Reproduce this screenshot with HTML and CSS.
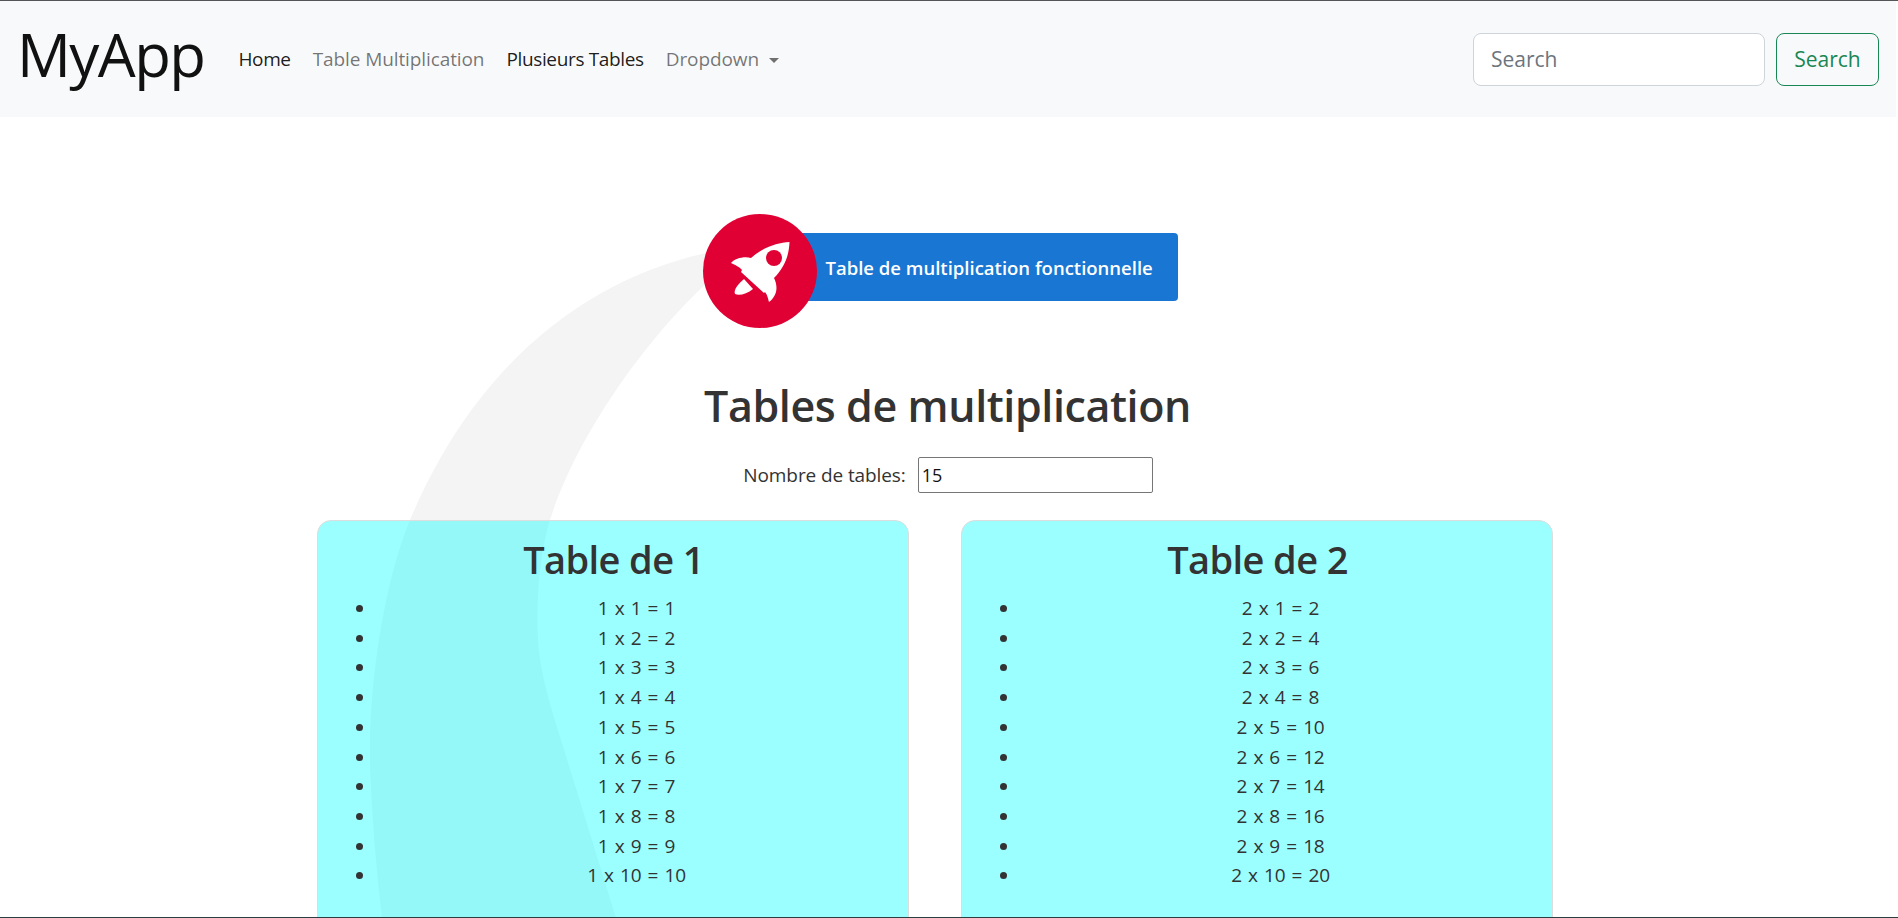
FILE: index.html
```html
<!DOCTYPE html>
<html lang="fr">
<head>
    <meta charset="UTF-8">
    <title>MyApp</title>
    <link rel="stylesheet" href="styles.css">
</head>
<body>
    <!-- decorative trail behind the rocket -->
    <svg class="trail" viewBox="0 0 1898 918" width="1898" height="918">
        <path d="M706 253C585 280 475 365 410 520C383 585 368 690 370 767C372 817 376 868 382 918L616 918C600 865 578 795 561 740C551 707 540 675 538 640C536 605 539 555 550 520C578 432 650 335 707 283Z"/>
    </svg>

    <nav class="navbar">
        <a class="brand" href="#">MyApp</a>
        <ul class="nav-links">
            <li><a class="nav-link dark" href="#">Home</a></li>
            <li><a class="nav-link" href="#">Table Multiplication</a></li>
            <li><a class="nav-link dark" href="#">Plusieurs Tables</a></li>
            <li><a class="nav-link caret" href="#">Dropdown</a></li>
        </ul>
        <form class="search">
            <input class="search-input" type="text" placeholder="Search">
            <button class="search-btn" type="button">Search</button>
        </form>
    </nav>

    <main class="content">
        <div class="banner">
            <span class="banner-icon">
                <svg viewBox="1 1 80 80" width="80" height="80">
                    <path fill="#fff" d="M70.5 12C58 13 44 17 32 28C26 26 16 28 12 33C16 35 21 37 23 40L22 42L45 63L46 62C49 66 49 69 50 72C57 67 60 58 55 48C66 37 70 25 70.5 12Z"/>
                    <path fill="#fff" d="M25 49L34 59C28 64 20 66 16 64C14 60 20 53 25 49Z"/>
                    <circle fill="#e00034" cx="55" cy="28" r="8"/>
                </svg>
            </span>
            <span class="banner-text">Table de multiplication fonctionnelle</span>
        </div>

        <h1 class="title">Tables de multiplication</h1>

        <div class="count-row">
            <label class="count-label" for="count">Nombre de tables:</label>
            <input class="count-input" id="count" type="number" value="15">
        </div>

        <div class="tables">
            <section class="table-card">
                <h2>Table de 1</h2>
                <ul>
                    <li>1 x 1 = 1</li>
                    <li>1 x 2 = 2</li>
                    <li>1 x 3 = 3</li>
                    <li>1 x 4 = 4</li>
                    <li>1 x 5 = 5</li>
                    <li>1 x 6 = 6</li>
                    <li>1 x 7 = 7</li>
                    <li>1 x 8 = 8</li>
                    <li>1 x 9 = 9</li>
                    <li>1 x 10 = 10</li>
                </ul>
            </section>
            <section class="table-card">
                <h2>Table de 2</h2>
                <ul>
                    <li>2 x 1 = 2</li>
                    <li>2 x 2 = 4</li>
                    <li>2 x 3 = 6</li>
                    <li>2 x 4 = 8</li>
                    <li>2 x 5 = 10</li>
                    <li>2 x 6 = 12</li>
                    <li>2 x 7 = 14</li>
                    <li>2 x 8 = 16</li>
                    <li>2 x 9 = 18</li>
                    <li>2 x 10 = 20</li>
                </ul>
            </section>
        </div>
    </main>
</body>
</html>
```

FILE: styles.css
```css
html, body {
    height: 100%;
    overflow: hidden;
}
body {
    position: relative;
    margin: 0;
    font-family: "Open Sans", sans-serif;
    color: #333;
    background: #fff;
    border-top: 1px solid #555;
    border-bottom: 1px solid #2c3e40;
    box-sizing: border-box;
}
.trail {
    position: absolute;
    top: -1px;
    left: 0;
}
.trail path {
    fill: #f4f4f4;
}
.navbar {
    position: relative;
    display: flex;
    align-items: center;
    height: 116px;
    margin-right: 2px;
    padding: 0 17px 0 17px;
    background-color: #f8f9fa;
}
.brand {
    margin-top: -11px;
    font-size: 60px;
    letter-spacing: -1.6px;
    color: #111;
    text-decoration: none;
}
.nav-links {
    display: flex;
    list-style: none;
    margin: 0 0 0 23px;
    padding: 0;
}
.nav-link {
    display: block;
    padding: 0 11px;
    font-size: 19px;
    letter-spacing: -0.1px;
    color: rgba(0, 0, 0, 0.55);
    text-decoration: none;
}
.nav-link.dark {
    letter-spacing: -0.35px;
    color: rgba(0, 0, 0, 0.9);
}
.caret::after {
    content: "";
    display: inline-block;
    margin-left: 10px;
    vertical-align: 3px;
    border-top: 5px solid;
    border-left: 5px solid transparent;
    border-right: 5px solid transparent;
}
.search {
    display: flex;
    gap: 11px;
    margin-left: auto;
}
.search-input {
    box-sizing: border-box;
    width: 292px;
    height: 53px;
    padding: 0 17px;
    font: 21px "Open Sans", sans-serif;
    background: #fff;
    border: 1px solid #ced4da;
    border-radius: 8px;
}
.search-input::placeholder {
    color: #6c757d;
}
.search-btn {
    box-sizing: border-box;
    width: 103px;
    height: 53px;
    padding: 0;
    font: 21px "Open Sans", sans-serif;
    color: #198754;
    background: transparent;
    border: 1px solid #198754;
    border-radius: 8px;
}
.content {
    position: relative;
    display: flex;
    flex-direction: column;
    align-items: center;
    padding-top: 97px;
}
.banner {
    display: flex;
    align-items: center;
    margin-left: -18px;
}
.banner-icon {
    position: relative;
    z-index: 1;
    display: flex;
    align-items: center;
    justify-content: center;
    width: 114px;
    height: 114px;
    background: #e00034;
    border-radius: 50%;
}
.banner-text {
    display: flex;
    align-items: center;
    box-sizing: border-box;
    width: 388px;
    height: 68px;
    margin: 0 0 8px -27px;
    padding: 0 0 0 36px;
    font-size: 18.5px;
    font-weight: 600;
    color: #fff;
    background: #1976d2;
    border-radius: 4px;
}
.title {
    margin: 48px 0 0 -3px;
    font-size: 43px;
    line-height: 60px;
    font-weight: 600;
    letter-spacing: -0.4px;
    color: #333;
}
.count-row {
    display: flex;
    align-items: center;
    gap: 12px;
    margin: 21px 2px 0 0;
}
.count-label {
    font-size: 19px;
    letter-spacing: -0.1px;
}
.count-input {
    box-sizing: border-box;
    width: 235px;
    height: 36px;
    padding: 0 3px;
    font: 18px "Open Sans", sans-serif;
    color: #111;
    background: #fff;
    border: 1px solid #767676;
    border-radius: 2px;
    appearance: textfield;
}
.tables {
    display: flex;
    gap: 52px;
    margin: 27px 29px 0 0;
}
.table-card {
    box-sizing: border-box;
    width: 592px;
    height: 500px;
    padding: 14px 10px 16px 16px;
    background: rgba(0, 255, 255, 0.39);
    border: 1px solid #ddd;
    border-radius: 14px;
}
.table-card h2 {
    margin: 0 4px 11px 0;
    font-size: 38px;
    line-height: 48px;
    font-weight: 600;
    letter-spacing: -0.6px;
    text-align: center;
}
.table-card ul {
    margin: 0;
    padding-left: 42px;
}
.table-card li {
    font-size: 19px;
    line-height: 29.7px;
    letter-spacing: -0.2px;
    word-spacing: 1.5px;
    text-align: center;
}
```
